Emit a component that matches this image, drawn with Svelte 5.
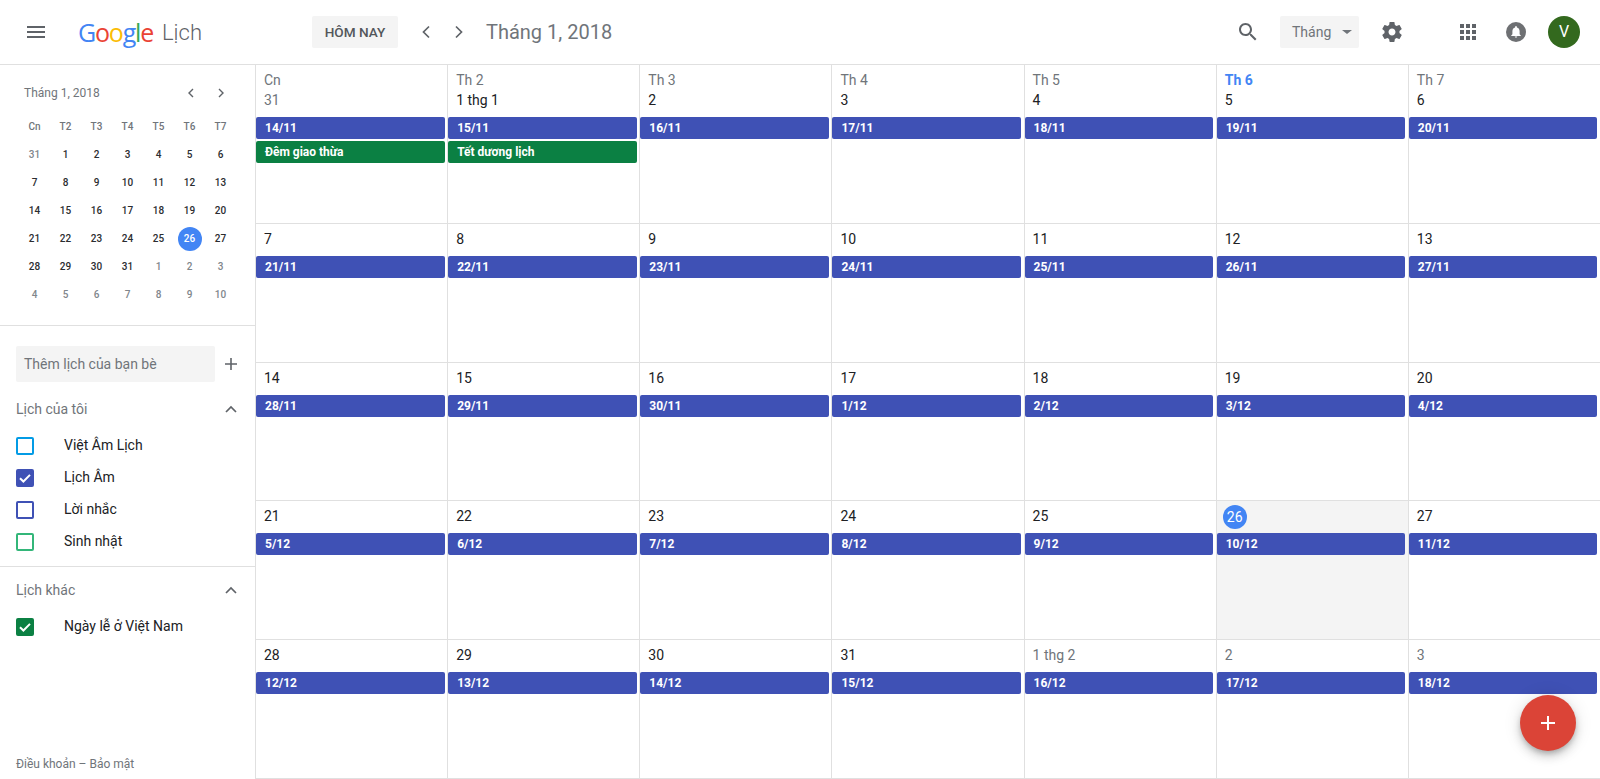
<script>
  const miniHead = ['Cn','T2','T3','T4','T5','T6','T7'];
  const miniDays = [];
  for (const d of [31]) miniDays.push({ d, off: true });
  for (let d = 1; d <= 31; d++) miniDays.push({ d, off: false });
  for (let d = 1; d <= 10; d++) miniDays.push({ d, off: true });

  const heads = ['Cn','Th 2','Th 3','Th 4','Th 5','Th 6','Th 7'];
  const dates = [
    '31','1 thg 1','2','3','4','5','6',
    '7','8','9','10','11','12','13',
    '14','15','16','17','18','19','20',
    '21','22','23','24','25','26','27',
    '28','29','30','31','1 thg 2','2','3'
  ];
  const lunar = [
    '14/11','15/11','16/11','17/11','18/11','19/11','20/11',
    '21/11','22/11','23/11','24/11','25/11','26/11','27/11',
    '28/11','29/11','30/11','1/12','2/12','3/12','4/12',
    '5/12','6/12','7/12','8/12','9/12','10/12','11/12',
    '12/12','13/12','14/12','15/12','16/12','17/12','18/12'
  ];
  const holidays = { 0: 'Đêm giao thừa', 1: 'Tết dương lịch' };
  const cells = dates.map((date, i) => ({
    date,
    lunar: lunar[i],
    head: i < 7 ? heads[i] : null,
    holiday: holidays[i],
    off: i === 0 || i >= 32,
    today: i === 26,
    headNow: i === 5
  }));
  const mine = [
    { name: 'Việt Âm Lịch', color: '#039be5', on: false },
    { name: 'Lịch Âm', color: '#3f51b5', on: true },
    { name: 'Lời nhắc', color: '#3f51b5', on: false },
    { name: 'Sinh nhật', color: '#33b679', on: false }
  ];
  const others = [{ name: 'Ngày lễ ở Việt Nam', color: '#0b8043', on: true }];
</script>

{#snippet calRow(c)}
  <div class="cal-row">
    <span class="box" class:on={c.on} style="border-color:{c.color};background:{c.on ? c.color : 'transparent'}">
      {#if c.on}
        <svg viewBox="0 0 18 18" width="18" height="18"><path d="M4 9.2l3.4 3.3L14 5.9" fill="none" stroke="#fff" stroke-width="2"/></svg>
      {/if}
    </span>
    <span class="cal-name">{c.name}</span>
  </div>
{/snippet}

{#snippet chevUp()}
  <svg class="chev-up" viewBox="0 0 12 8" width="12" height="8"><path d="M1 7l5-5 5 5" fill="none" stroke="#5f6368" stroke-width="1.7"/></svg>
{/snippet}

<div class="page">
  <header class="top">
    <svg class="burger" viewBox="0 0 18 12" width="18" height="12"><path d="M0 0h18v2H0zM0 5h18v2H0zM0 10h18v2H0z" fill="#5f6368"/></svg>
    <div class="logo">
      <span class="google"><span class="b">G</span><span class="r">o</span><span class="y">o</span><span class="b">g</span><span class="g">l</span><span class="r">e</span></span>
      <span class="lich">Lịch</span>
    </div>
    <button class="today">HÔM NAY</button>
    <svg class="nav first" viewBox="0 0 10 14" width="10" height="14"><path d="M8 1.5L2.5 7 8 12.5" fill="none" stroke="#5f6368" stroke-width="1.7"/></svg>
    <svg class="nav" viewBox="0 0 10 14" width="10" height="14"><path d="M2 1.5L7.5 7 2 12.5" fill="none" stroke="#5f6368" stroke-width="1.7"/></svg>
    <div class="title">Tháng 1, 2018</div>

    <div class="right">
      <svg class="search" viewBox="0 0 24 24" width="24" height="24"><path fill="#5f6368" d="M15.5 14h-.79l-.28-.27C15.41 12.59 16 11.11 16 9.5 16 5.91 13.09 3 9.5 3S3 5.91 3 9.5 5.91 16 9.5 16c1.61 0 3.09-.59 4.23-1.57l.27.28v.79l5 4.99L20.49 19l-4.99-5zm-6 0C7.01 14 5 11.99 5 9.5S7.01 5 9.5 5 14 7.01 14 9.5 11.99 14 9.5 14z"/></svg>
      <div class="view">
        <span>Tháng</span>
        <i class="caret"></i>
      </div>
      <svg class="gear" viewBox="0 0 24 24" width="24" height="24"><path fill="#5f6368" d="M19.43 12.98c.04-.32.07-.64.07-.98s-.03-.66-.07-.98l2.11-1.65c.19-.15.24-.42.12-.64l-2-3.46c-.12-.22-.39-.3-.61-.22l-2.49 1c-.52-.4-1.08-.73-1.69-.98l-.38-2.65C14.46 2.18 14.25 2 14 2h-4c-.25 0-.46.18-.49.42l-.38 2.65c-.61.25-1.17.59-1.69.98l-2.49-1c-.23-.09-.49 0-.61.22l-2 3.46c-.13.22-.07.49.12.64l2.11 1.65c-.04.32-.07.65-.07.98s.03.66.07.98l-2.11 1.65c-.19.15-.24.42-.12.64l2 3.46c.12.22.39.3.61.22l2.49-1c.52.4 1.08.73 1.69.98l.38 2.65c.03.24.24.42.49.42h4c.25 0 .46-.18.49-.42l.38-2.65c.61-.25 1.17-.59 1.69-.98l2.49 1c.23.09.49 0 .61-.22l2-3.46c.12-.22.07-.49-.12-.64l-2.11-1.65zM12 15.5c-1.93 0-3.5-1.57-3.5-3.5s1.57-3.5 3.5-3.5 3.5 1.57 3.5 3.5-1.57 3.5-3.5 3.5z"/></svg>
      <svg class="apps" viewBox="0 0 16 16" width="16" height="16"><path fill="#5f6368" d="M0 0h4v4H0zM6 0h4v4H6zM12 0h4v4h-4zM0 6h4v4H0zM6 6h4v4H6zM12 6h4v4h-4zM0 12h4v4H0zM6 12h4v4H6zM12 12h4v4h-4z"/></svg>
      <svg class="bell" viewBox="0 0 20 20" width="20" height="20"><circle cx="10" cy="10" r="10" fill="#6e7073"/><path transform="translate(2.8 2.6) scale(.6)" fill="#fff" d="M12 22c1.1 0 2-.9 2-2h-4c0 1.1.89 2 2 2zm6-6v-5c0-3.07-1.64-5.64-4.5-6.32V4c0-.83-.67-1.5-1.5-1.5s-1.5.67-1.5 1.5v.68C7.63 5.36 6 7.92 6 11v5l-2 2v1h16v-1l-2-2z"/></svg>
      <div class="avatar">V</div>
    </div>
  </header>

  <div class="body">
    <aside class="side">
      <section class="mini">
        <div class="mini-top">
          <span class="mini-title">Tháng 1, 2018</span>
          <svg class="mini-prev" viewBox="0 0 8 12" width="8" height="12"><path d="M6 2L2 6l4 4" fill="none" stroke="#5f6368" stroke-width="1.4"/></svg>
          <svg class="mini-next" viewBox="0 0 8 12" width="8" height="12"><path d="M2 2l4 4-4 4" fill="none" stroke="#5f6368" stroke-width="1.4"/></svg>
        </div>
        <div class="mini-grid">
          {#each miniHead as h}<span class="mini-h">{h}</span>{/each}
          {#each miniDays as m}
            <span class="mini-d" class:off={m.off}>
              {#if !m.off && m.d === 26}<b class="mini-today">26</b>{:else}{m.d}{/if}
            </span>
          {/each}
        </div>
      </section>

      <section class="lists">
        <div class="add-row">
          <div class="add-input">Thêm lịch của bạn bè</div>
          <svg class="plus" viewBox="0 0 12 12" width="12" height="12"><path d="M5.2 0h1.6v5.2H12v1.6H6.8V12H5.2V6.8H0V5.2h5.2z" fill="#5f6368"/></svg>
        </div>
        <div class="sec-head mine"><span>Lịch của tôi</span>{@render chevUp()}</div>
        <div class="cal-list">
          {#each mine as c}{@render calRow(c)}{/each}
        </div>
      </section>

      <section class="others">
        <div class="sec-head"><span>Lịch khác</span>{@render chevUp()}</div>
        <div class="cal-list">
          {#each others as c}{@render calRow(c)}{/each}
        </div>
      </section>

      <footer class="foot">Điều khoản – Bảo mật</footer>
    </aside>

    <main class="grid">
      {#each cells as c}
        <div class="cell" class:is-today={c.today} class:first={c.head}>
          <div class="cell-head">
            {#if c.head}<div class="dow" class:now={c.headNow}>{c.head}</div>{/if}
            <div class="date" class:off={c.off}>
              {#if c.today}<span class="today-dot">{c.date}</span>{:else}{c.date}{/if}
            </div>
          </div>
          <div class="ev lunar">{c.lunar}</div>
          {#if c.holiday}<div class="ev holiday">{c.holiday}</div>{/if}
        </div>
      {/each}
    </main>
  </div>

  <button class="fab" aria-label="Tạo">
    <svg viewBox="0 0 14 14" width="14" height="14"><path d="M6 0h2v6h6v2H8v6H6V8H0V6h6z" fill="#fff"/></svg>
  </button>
</div>

<style>
  :global(body) { margin: 0; background: #fff; }
  .page {
    position: relative;
    height: 779px;
    overflow: hidden;
    font-family: Roboto, "Noto Sans", sans-serif;
    color: #202124;
    display: flex;
    flex-direction: column;
  }
  .top {
    height: 64px;
    flex: none;
    box-sizing: content-box;
    border-bottom: 1px solid #e0e0e0;
    display: flex;
    align-items: center;
  }
  .burger { margin-left: 27px; flex: none; }
  .logo { margin-left: 33px; display: flex; align-items: center; width: 234px; flex: none; }
  .google { font-family: "Open Sans", sans-serif; font-size: 25px; letter-spacing: -1.2px; font-weight: 500; line-height: 32px; }
  .b { color: #4285f4; } .r { color: #ea4335; } .y { color: #fbbc05; } .g { color: #34a853; }
  .lich { font-size: 22px; font-weight: 300; color: #5f6368; margin-left: 9px; }
  .today {
    width: 86px; height: 32px; border: 0; border-radius: 2px; background: #f4f4f4;
    font: 500 13.6px Roboto, sans-serif; color: #53575b; padding: 0; flex: none;
  }
  .nav { flex: none; margin-left: 23px; }
  .nav.first { margin-left: 23px; }
  .title { font-size: 20px; color: #70757a; margin-left: 22px; }
  .right { margin-left: auto; display: flex; align-items: center; }
  .search { margin-right: 20px; }
  .view {
    width: 79px; height: 32px; box-sizing: border-box; padding: 0 7px 0 12px;
    background: #f4f4f4; border-radius: 2px; display: flex; align-items: center; justify-content: space-between;
    font-size: 14px; color: #70757a;
  }
  .caret { width: 0; height: 0; border-left: 5px solid transparent; border-right: 5px solid transparent; border-top: 4px solid #70757a; }
  .gear { margin-left: 21px; }
  .apps { margin-left: 56px; }
  .bell { margin-left: 30px; }
  .avatar {
    margin: 0 20px 0 22px; width: 32px; height: 32px; border-radius: 50%; background: #33691e; color: #fff;
    font-size: 16px; line-height: 32px; text-align: center;
  }

  .body { flex: 1; display: flex; min-height: 0; }
  .side { width: 255px; flex: none; display: flex; flex-direction: column; }

  .mini { padding: 18px 0 16px; border-bottom: 1px solid #e0e0e0; }
  .mini-top { display: flex; align-items: center; height: 20px; padding-left: 24px; }
  .mini-title { font-size: 12px; color: #70757a; flex: 1; }
  .mini-prev { margin-right: 22px; }
  .mini-next { margin-right: 30px; }
  .mini-grid {
    margin: 10px 0 0 19px;
    display: grid;
    grid-template-columns: repeat(7, 31px);
    grid-auto-rows: 28px;
    font-size: 10px;
    text-align: center;
    line-height: 28px;
  }
  .mini-h { color: #70757a; font-weight: 500; }
  .mini-d { color: #2b2d30; font-weight: 500; }
  .mini-d.off { color: #80868b; }
  .mini-today {
    display: block; width: 24px; height: 24px; margin: 2px auto; line-height: 24px;
    border-radius: 50%; background: #4285f4; color: #fff; font-weight: 500;
  }

  .lists { padding: 20px 0 8px; border-bottom: 1px solid #e0e0e0; }
  .add-row { display: flex; align-items: center; padding-left: 16px; }
  .add-input {
    width: 199px; height: 36px; box-sizing: border-box; padding: 1px 0 0 8px; background: #f4f4f4; border-radius: 2px;
    font-size: 14px; line-height: 35px; color: #70757a;
  }
  .plus { margin-left: 10px; }
  .sec-head {
    display: flex; align-items: center; justify-content: space-between; height: 20px; line-height: 20px;
    padding: 0 18px 0 16px; font-size: 14px; color: #70757a;
  }
  .sec-head.mine { margin-top: 17px; }
  .cal-list { margin-top: 11px; }
  .cal-row { height: 32px; display: flex; align-items: center; padding-left: 16px; }
  .box { width: 18px; height: 18px; box-sizing: border-box; border: 2px solid; border-radius: 2px; position: relative; flex: none; }
  .box svg { position: absolute; left: -2px; top: -2px; }
  .cal-name { margin-left: 30px; padding-bottom: 2px; font-size: 14px; color: #202124; }
  .others { padding-top: 13px; }
  .foot { margin-top: auto; padding: 0 0 5px 16px; font-size: 12px; line-height: 20px; color: #70757a; }

  .grid {
    flex: 1;
    min-width: 0;
    display: grid;
    grid-template-columns: repeat(7, 1fr);
    grid-template-rows: 159px 139px 138px 139px 139px;
  }
  .cell { border-left: 1px solid #e0e0e0; border-bottom: 1px solid #e0e0e0; min-width: 0; }
  .cell.is-today { background: #f4f4f4; }
  .cell-head { height: 32px; box-sizing: border-box; padding: 5px 8px 7px; font-size: 14px; line-height: 20px; color: #202124; }
  .cell.first .cell-head { height: 52px; padding: 5px 8px 7px; }
  .dow { color: #70757a; }
  .dow.now { color: #4285f4; font-weight: 700; }
  .date.off { color: #70757a; }
  .today-dot {
    display: block; width: 24px; height: 24px; line-height: 24px; margin: -1px 0 0 -2px; text-align: center;
    border-radius: 50%; background: #4285f4; color: #fff;
  }
  .ev {
    height: 22px; margin: 0 2.5px 2px 0; box-sizing: border-box; padding-left: 9px; border-radius: 2px;
    font-size: 12px; font-weight: 700; line-height: 23px; color: #fff; white-space: nowrap; overflow: hidden;
  }
  .lunar { background: #3f51b5; }
  .holiday { background: #0b8043; }

  .fab {
    position: absolute; left: 1520px; top: 695px; width: 56px; height: 56px; padding: 0; border: 0; border-radius: 50%;
    background: #db4437; box-shadow: 0 3px 5px -1px rgba(0,0,0,.2), 0 6px 10px 0 rgba(0,0,0,.14), 0 1px 18px 0 rgba(0,0,0,.12);
    display: flex; align-items: center; justify-content: center;
  }
</style>
